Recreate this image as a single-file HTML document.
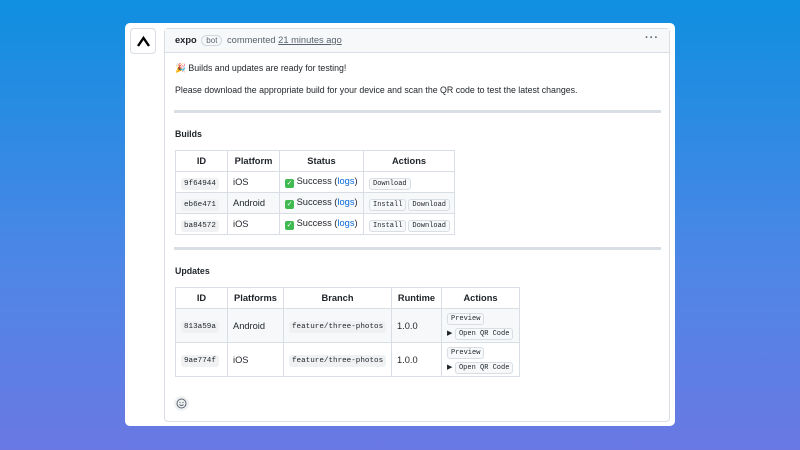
<!DOCTYPE html>
<html><head><style>
*{margin:0;padding:0;box-sizing:border-box}
body{width:800px;height:450px;overflow:hidden;background:linear-gradient(180deg,#0f8fe0 0%,#4f86e6 60%,#6a78e4 100%);font-family:"Liberation Sans",sans-serif;color:#1f2328;position:relative}
.card{position:absolute;left:125px;top:23px;width:550px;height:403px;background:#fff;border-radius:5px}
.av{position:absolute;left:130px;top:28px;width:26px;height:26px;border:1px solid #d8dee4;border-radius:4px;background:#fff}
.box{position:absolute;left:164px;top:28px;width:506px;height:394px;border:1px solid #d8dee4;border-radius:4px}
.hd{height:24px;background:#f6f8fa;border-bottom:1px solid #d8dee4;font-size:9.3px;color:#59636e;padding:6px 0 0 10px;position:relative}
.hd b{color:#1f2328}
.bot{border:1px solid #d0d7de;border-radius:8px;padding:0 4px;font-size:8px;margin:0 2px}
.t{position:absolute;font-size:8.8px;white-space:nowrap}
.hr{position:absolute;left:174px;width:487px;height:3px;background:#d8dee4}
table{position:absolute;border-collapse:collapse;font-size:9.3px;table-layout:fixed}
td,th{border:1px solid #d8dee4;padding:0 5px;text-align:left;white-space:nowrap}
th{text-align:center;font-weight:bold}
code{font-family:"Liberation Mono",monospace;font-size:7.6px;background:#eff1f3;border-radius:3px;padding:2px 3px}
.btn{font-family:"Liberation Mono",monospace;font-size:7px;border:1px solid #d8dee4;border-radius:3px;padding:1px 3px;background:#f6f8fa;margin-right:2px}
a{color:#0969da}
.ck{display:inline-block;width:9px;height:9px;background:#3fb950;border-radius:2px;color:#fff;font-size:7px;line-height:9px;text-align:center;vertical-align:-1px}
</style></head><body>
<div class="card"></div>
<div class="av"><svg width="26" height="26"><path d="M7 17 L12.5 9 L18 17" fill="none" stroke="#000" stroke-width="2.4"/></svg></div>
<div class="box"><div class="hd"><b>expo</b> <span class="bot">bot</span> commented <u>21 minutes ago</u><span style="position:absolute;right:10px;top:3px;color:#59636e;font-size:11px;letter-spacing:1px;font-weight:bold">···</span></div></div>
<div class="t" style="left:175px;top:63px">🎉 Builds and updates are ready for testing!</div>
<div class="t" style="left:175px;top:85px">Please download the appropriate build for your device and scan the QR code to test the latest changes.</div>
<div class="hr" style="top:110px"></div>
<div class="t" style="left:175px;top:129px;font-weight:bold">Builds</div>
<table style="left:175px;top:150px;width:279px">
<colgroup><col style="width:52px"><col style="width:52px"><col style="width:84px"><col style="width:91px"></colgroup>
<tr style="height:21px"><th>ID</th><th>Platform</th><th>Status</th><th>Actions</th></tr>
<tr style="height:21px"><td><code>9f64944</code></td><td>iOS</td><td><span class="ck">✓</span> Success (<a>logs</a>)</td><td><span class="btn">Download</span></td></tr>
<tr style="height:21px;background:#f6f8fa"><td><code>eb6e471</code></td><td>Android</td><td><span class="ck">✓</span> Success (<a>logs</a>)</td><td><span class="btn">Install</span><span class="btn">Download</span></td></tr>
<tr style="height:21px"><td><code>ba84572</code></td><td>iOS</td><td><span class="ck">✓</span> Success (<a>logs</a>)</td><td><span class="btn">Install</span><span class="btn">Download</span></td></tr>
</table>
<div class="hr" style="top:247px"></div>
<div class="t" style="left:175px;top:266px;font-weight:bold">Updates</div>
<table style="left:175px;top:287px;width:344px">
<colgroup><col style="width:52px"><col style="width:56px"><col style="width:108px"><col style="width:50px"><col style="width:78px"></colgroup>
<tr style="height:21px"><th>ID</th><th>Platforms</th><th>Branch</th><th>Runtime</th><th>Actions</th></tr>
<tr style="height:34px;background:#f6f8fa"><td><code>813a59a</code></td><td>Android</td><td><code>feature/three-photos</code></td><td>1.0.0</td><td style="line-height:13px"><span class="btn">Preview</span><br><span style="font-size:7px">▶</span> <span class="btn">Open QR Code</span></td></tr>
<tr style="height:34px"><td><code>9ae774f</code></td><td>iOS</td><td><code>feature/three-photos</code></td><td>1.0.0</td><td style="line-height:13px"><span class="btn">Preview</span><br><span style="font-size:7px">▶</span> <span class="btn">Open QR Code</span></td></tr>
</table>
<div style="position:absolute;left:174px;top:396px;width:15px;height:15px;border-radius:50%;background:#eff1f3"><svg width="15" height="15"><circle cx="7.5" cy="7.5" r="4.5" fill="none" stroke="#59636e" stroke-width="1"/><path d="M5.5 8.5 Q7.5 10.5 9.5 8.5" fill="none" stroke="#59636e" stroke-width="0.9"/><circle cx="6" cy="6.5" r="0.6" fill="#59636e"/><circle cx="9" cy="6.5" r="0.6" fill="#59636e"/></svg></div>
</body></html>
